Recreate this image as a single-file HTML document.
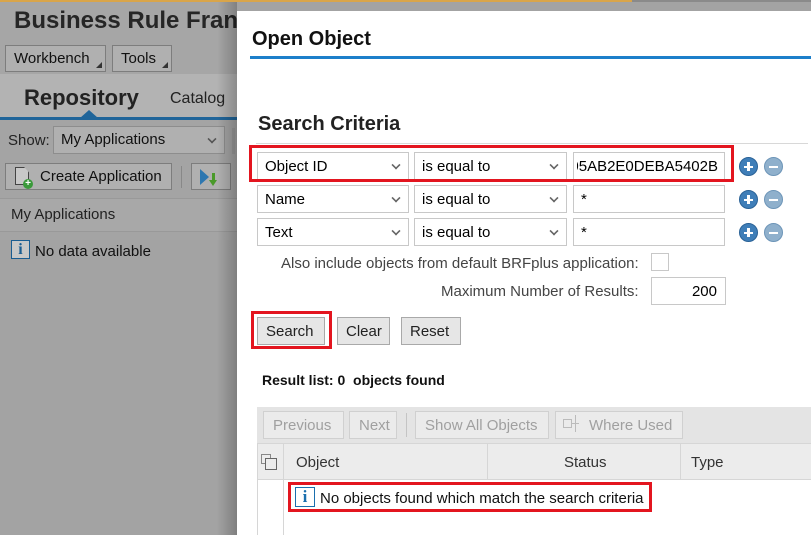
<!DOCTYPE html>
<html><head><meta charset="utf-8"><style>
*{box-sizing:border-box;margin:0;padding:0}
body{width:811px;height:535px;overflow:hidden;position:relative;font-family:"Liberation Sans",Arial,sans-serif;background:#a3a3a3;color:#000}
.a{position:absolute}
.btnL{position:absolute;border:1px solid #7d7d7d;background:#b0b0b0;font-size:15px;color:#111;padding:0 8px;line-height:25px;height:27px}
.tri{position:absolute;right:3px;bottom:3px;width:0;height:0;border-left:6px solid transparent;border-bottom:6px solid #333}
.sel{position:absolute;height:28px;border:1px solid #c8c8c8;background:#fff;font-size:15px;line-height:27px;padding-left:7px}
.sel .c{position:absolute;right:8px;top:8px;width:8px;height:8px;border-right:2px solid #666;border-bottom:2px solid #666;transform:rotate(45deg) scale(.8)}
.pm{position:absolute;width:19px;height:19px;border-radius:50%;background:#3f7eb8;border:1px solid #2a6297}
.pm.m{background:#8fb0cc;border-color:#6d95b8}
.pm:before{content:"";position:absolute;left:4px;top:7.5px;width:9px;height:2.5px;background:#fff}
.pm.p:after{content:"";position:absolute;left:7.3px;top:4px;width:2.5px;height:9px;background:#fff}
.b{position:absolute;height:28px;border:1px solid #a9a9a9;background:#e6e6e6;font-size:15px;line-height:27px;padding:0 8px;color:#222}
.tb{position:absolute;height:28px;border:1px solid #d0d0d0;background:#ebebeb;font-size:15px;line-height:27px;padding:0 9px;color:#a0a0a0}
.red{position:absolute;border:3px solid #e3151f}
</style></head><body>
<div class="a" style="left:0;top:0;width:632px;height:2px;background:#d9a54a"></div>
<div class="a" style="left:632px;top:0;width:179px;height:2px;background:#8a8a8a"></div>
<div class="a" style="left:0;top:2px;width:237px;height:72px;background:#a6a6a6"></div>
<div class="a" style="left:14px;top:7px;font-size:24px;font-weight:bold;color:#262626">Business Rule Fran</div>
<div class="btnL" style="left:5px;top:45px;width:101px">Workbench<span class="tri"></span></div>
<div class="btnL" style="left:112px;top:45px;width:60px">Tools<span class="tri"></span></div>
<div class="a" style="left:0;top:74px;width:237px;height:44px;background:#b3b3b3"></div>
<div class="a" style="left:24px;top:85px;font-size:22px;font-weight:bold;color:#222">Repository</div>
<div class="a" style="left:170px;top:90px;font-size:16px;color:#222">Catalog</div>
<div class="a" style="left:0;top:117px;width:237px;height:3px;background:#20659a"></div>
<div class="a" style="left:80px;top:110px;width:0;height:0;border-left:9px solid transparent;border-right:9px solid transparent;border-bottom:8px solid #20659a"></div>
<div class="a" style="left:0;top:120px;width:237px;height:120px;background:#a4a4a4"></div>
<div class="a" style="left:8px;top:132px;font-size:15px;color:#222">Show:</div>
<div class="a" style="left:53px;top:126px;width:172px;height:28px;background:#b0b0b0;border:1px solid #8d8d8d;font-size:15px;line-height:26px;padding-left:7px;color:#111">My Applications<span style="position:absolute;right:8px;top:8px;width:8px;height:8px;border-right:2px solid #555;border-bottom:2px solid #555;transform:rotate(45deg) scale(.8)"></span></div>
<div class="a" style="left:232px;top:128px;width:3px;height:26px;background:#999"></div>
<div class="btnL" style="left:5px;top:163px;width:167px;padding-left:34px">Create Application</div>
<div class="a" style="left:15px;top:167px;width:14px;height:18px;border:1px solid #444;background:#c8c8c8;clip-path:polygon(0 0,65% 0,100% 30%,100% 100%,0 100%)"></div>
<div class="a" style="left:23px;top:179px;width:10px;height:10px;border-radius:50%;background:#3a9a3a;color:#fff;font-size:10px;line-height:10px;text-align:center;font-weight:bold">+</div>
<div class="a" style="left:181px;top:166px;width:1px;height:22px;background:#888"></div>
<div class="btnL" style="left:191px;top:163px;width:40px"></div>
<div class="a" style="left:200px;top:169px;width:0;height:0;border-top:8px solid transparent;border-bottom:8px solid transparent;border-left:9px solid #2e77b0"></div>
<div class="a" style="left:212px;top:173px;width:3px;height:8px;background:#4a9a2a"></div>
<div class="a" style="left:209px;top:180px;width:0;height:0;border-left:4.5px solid transparent;border-right:4.5px solid transparent;border-top:6px solid #4a9a2a"></div>
<div class="a" style="left:0;top:198px;width:237px;height:34px;background:#a8a8a8;border-top:1px solid #999;border-bottom:1px solid #999"></div>
<div class="a" style="left:11px;top:206px;font-size:15px;color:#222">My Applications</div>
<div class="a" style="left:11px;top:240px;width:19px;height:19px;border:1px solid #1a5d92;background:#c8c8c8;color:#1a5d92;font-weight:bold;font-size:16px;text-align:center;line-height:17px;font-family:'Liberation Serif',serif">i</div>
<div class="a" style="left:35px;top:243px;font-size:15px;color:#111">No data available</div>
<div class="a" style="left:217px;top:2px;width:20px;height:533px;background:linear-gradient(to right,rgba(0,0,0,0),rgba(0,0,0,.22))"></div>

<div class="a" style="left:237px;top:11px;width:574px;height:524px;background:#fff"></div>
<div class="a" style="left:252px;top:28px;font-size:20px;font-weight:bold;color:#111">Open Object</div>
<div class="a" style="left:250px;top:56px;width:561px;height:3px;background:#1d7fca"></div>
<div class="a" style="left:258px;top:113px;font-size:20px;font-weight:bold;color:#222">Search Criteria</div>
<div class="a" style="left:256px;top:143px;width:552px;height:1px;background:#d8d8d8"></div>

<div class="sel" style="left:257px;top:152px;width:152px">Object ID<span class="c"></span></div>
<div class="sel" style="left:414px;top:152px;width:153px">is equal to<span class="c"></span></div>
<div class="sel" style="left:573px;top:152px;width:152px;overflow:hidden;white-space:nowrap;padding:0"><span style="position:absolute;right:6px">05AB2E0DEBA5402B</span><span style="position:absolute;left:0;top:0;width:3px;height:26px;background:#fff"></span></div>
<div class="pm p" style="left:739px;top:157px"></div><div class="pm m" style="left:764px;top:157px"></div>
<div class="red" style="left:249px;top:145px;width:485px;height:37px"></div>

<div class="sel" style="left:257px;top:185px;width:152px">Name<span class="c"></span></div>
<div class="sel" style="left:414px;top:185px;width:153px">is equal to<span class="c"></span></div>
<div class="sel" style="left:573px;top:185px;width:152px">*</div>
<div class="pm p" style="left:739px;top:190px"></div><div class="pm m" style="left:764px;top:190px"></div>

<div class="sel" style="left:257px;top:218px;width:152px">Text<span class="c"></span></div>
<div class="sel" style="left:414px;top:218px;width:153px">is equal to<span class="c"></span></div>
<div class="sel" style="left:573px;top:218px;width:152px">*</div>
<div class="pm p" style="left:739px;top:223px"></div><div class="pm m" style="left:764px;top:223px"></div>

<div class="a" style="left:281px;top:255px;font-size:15px;color:#444">Also include objects from default BRFplus application:</div>
<div class="a" style="left:651px;top:253px;width:18px;height:18px;border:1px solid #c8c8c8"></div>
<div class="a" style="left:441px;top:283px;font-size:15px;color:#444">Maximum Number of Results:</div>
<div class="sel" style="left:651px;top:277px;width:75px;text-align:right;padding-right:8px">200</div>

<div class="b" style="left:257px;top:317px;width:68px">Search</div>
<div class="red" style="left:251px;top:311px;width:81px;height:38px"></div>
<div class="b" style="left:337px;top:317px;width:53px">Clear</div>
<div class="b" style="left:401px;top:317px;width:60px">Reset</div>

<div class="a" style="left:262px;top:372px;font-size:14px;font-weight:bold;color:#111">Result list: 0&nbsp; objects found</div>

<div class="a" style="left:257px;top:407px;width:554px;height:36px;background:#e4e4e4"></div>
<div class="tb" style="left:263px;top:411px;width:81px">Previous</div>
<div class="tb" style="left:349px;top:411px;width:48px">Next</div>
<div class="a" style="left:406px;top:413px;width:1px;height:24px;background:#c4c4c4"></div>
<div class="tb" style="left:415px;top:411px;width:134px">Show All Objects</div>
<div class="tb" style="left:555px;top:411px;width:128px;padding-left:33px">Where Used</div>
<div class="a" style="left:563px;top:419px;width:9px;height:9px;border:1px solid #bbb"></div>
<div class="a" style="left:572px;top:423px;width:7px;height:1px;background:#bbb"></div>
<div class="a" style="left:575px;top:415px;width:1px;height:17px;background:#bbb"></div>
<div class="a" style="left:257px;top:443px;width:554px;height:37px;background:#ececec;border-top:1px solid #d6d6d6;border-bottom:1px solid #d6d6d6"></div>
<div class="a" style="left:257px;top:443px;width:1px;height:92px;background:#d6d6d6"></div>
<div class="a" style="left:283px;top:443px;width:1px;height:92px;background:#d6d6d6"></div>
<div class="a" style="left:487px;top:443px;width:1px;height:37px;background:#d6d6d6"></div>
<div class="a" style="left:680px;top:443px;width:1px;height:37px;background:#d6d6d6"></div>
<div class="a" style="left:261px;top:454px;width:10px;height:10px;border:1px solid #888"></div>
<div class="a" style="left:265px;top:458px;width:12px;height:12px;border:1px solid #666;background:#ececec"></div>
<div class="a" style="left:296px;top:454px;font-size:15px;color:#333">Object</div>
<div class="a" style="left:564px;top:454px;font-size:15px;color:#333">Status</div>
<div class="a" style="left:691px;top:454px;font-size:15px;color:#333">Type</div>
<div class="red" style="left:288px;top:482px;width:364px;height:30px"></div>
<div class="a" style="left:295px;top:487px;width:20px;height:20px;border:1px solid #1a6fae;background:#fff;color:#1a6fae;font-weight:bold;font-size:17px;text-align:center;line-height:18px;font-family:'Liberation Serif',serif">i</div>
<div class="a" style="left:320px;top:490px;font-size:15px;color:#111">No objects found which match the search criteria</div>
</body></html>
